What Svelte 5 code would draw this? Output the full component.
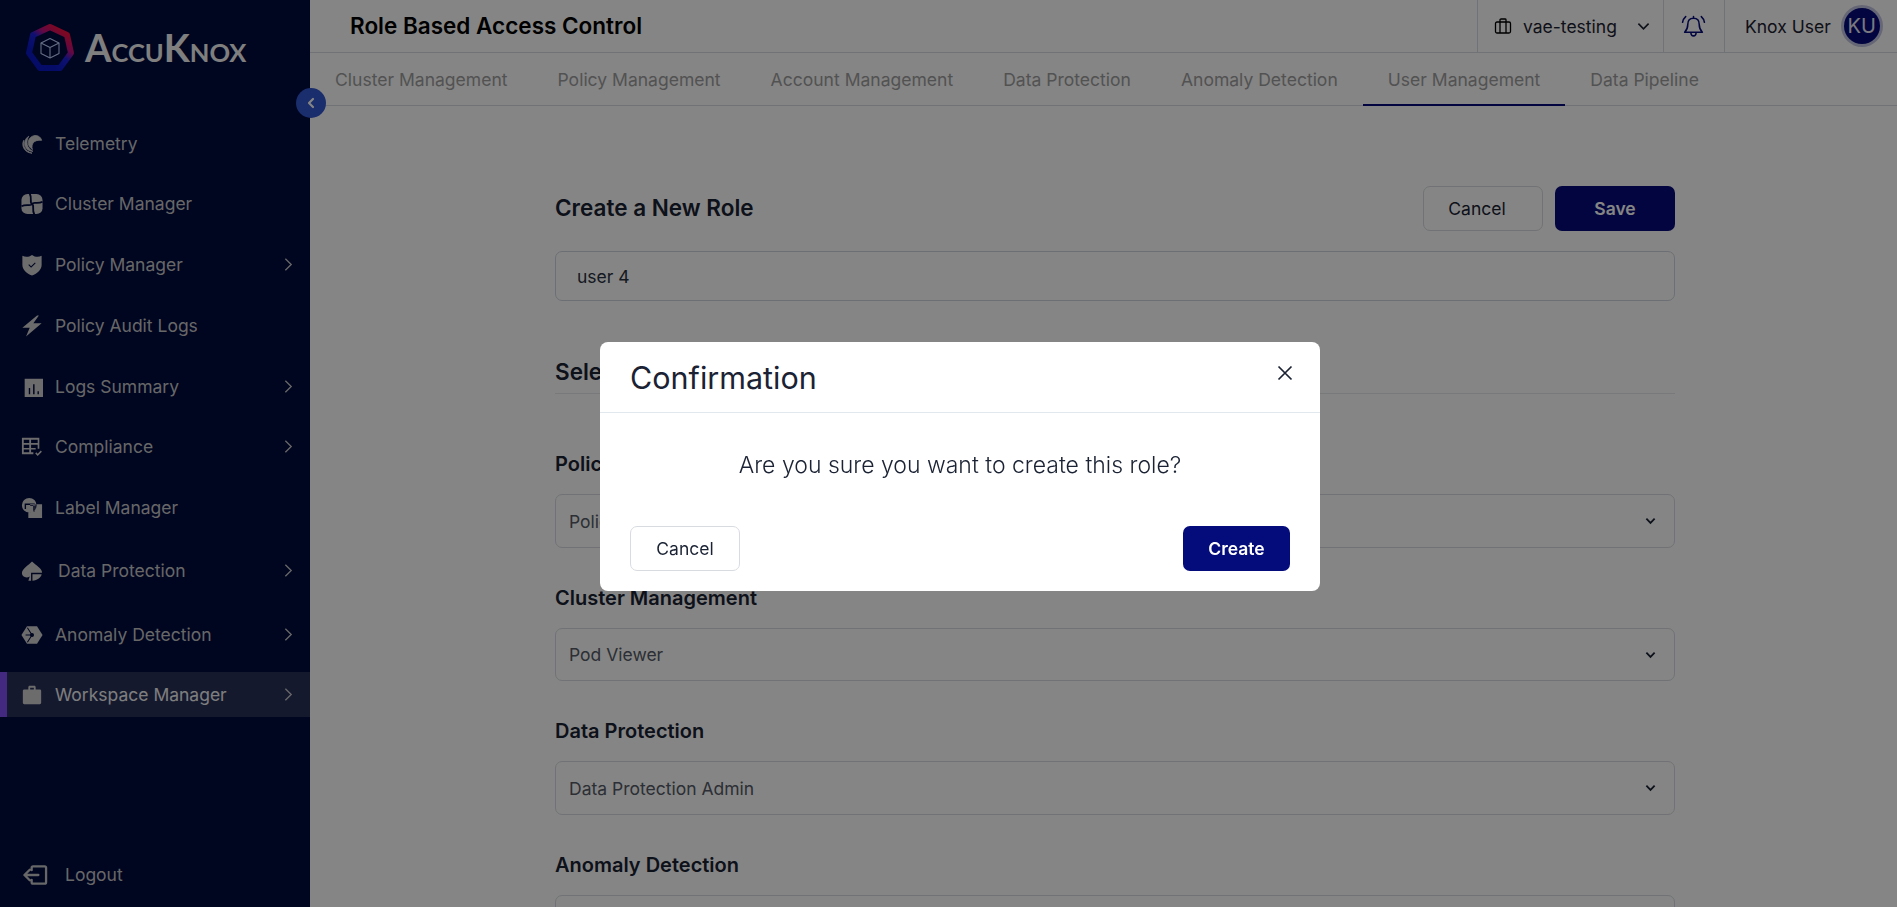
<script>
  // Sidebar entries; icon paths are drawn on a 24x24 box
  const navItems = [
    { label: 'Telemetry', icon: 'telemetry', cls: 'nudge' },
    { label: 'Cluster Manager', icon: 'cluster' },
    { label: 'Policy Manager', icon: 'shield', more: true },
    { label: 'Policy Audit Logs', icon: 'bolt' },
    { label: 'Logs Summary', icon: 'logs', more: true },
    { label: 'Compliance', icon: 'compliance', more: true, cls: 'tight' },
    { label: 'Label Manager', icon: 'label' },
    { label: 'Data Protection', icon: 'spade', more: true, cls: 'shift-2 indent' },
    { label: 'Anomaly Detection', icon: 'anomaly', more: true, cls: 'shift-3' },
    { label: 'Workspace Manager', icon: 'case', more: true, cls: 'active tight' },
  ];

  const tabs = [
    'Cluster Management',
    'Policy Management',
    'Account Management',
    'Data Protection',
    'Anomaly Detection',
    'User Management',
    'Data Pipeline',
  ];

  const fields = [
    { label: 'Policy Management', value: 'Policy Viewer' },
    { label: 'Cluster Management', value: 'Pod Viewer' },
    { label: 'Data Protection', value: 'Data Protection Admin' },
    { label: 'Anomaly Detection', value: 'Anomaly Viewer' },
  ];

  let roleName = $state('user 4');
  let confirmOpen = $state(true);
</script>

{#snippet navIcon(name)}
  <svg class="nav-icon" viewBox="0 0 24 24" aria-hidden="true">
    {#if name === 'telemetry'}
      <g class="heavy">
        <path d="M22.500 8C21.500 4 17.500 2 14 3 10 4 7.500 7.500 8 11.500 8.500 14.500 10 16.500 12.500 18 11.500 15.500 12 12 13.500 10.500 15 8.500 18.500 7.500 22.500 8z"/>
        <path d="M8.500 3.500C4.500 6 3 10.500 4.500 14.500 6 18 9 20 13 20 10 18.500 7.500 16 6.800 12.500 6 9 7 6 8.500 3.500z"/>
        <path d="M3 8C1 12 2 16.500 5.500 19.500 7.500 21 9.500 22 12 22 8.500 21 5 19 3.500 15 2.500 12.500 2.500 10.500 3 8z"/>
      </g>
    {:else if name === 'cluster'}
      <rect x="0.500" y="1" width="23" height="22" rx="6.500" />
      <g class="cut">
        <path d="M12 12C9 11 12.500 6 9.500 0.500" />
        <path d="M12 12C13 9 18 12.500 23.500 9.500" />
        <path d="M12 12C15 13 11.500 18 14.500 23.500" />
        <path d="M12 12C11 15 6 11.500 0.500 14.500" />
      </g>
    {:else if name === 'shield'}
      <path fill-rule="evenodd" d="M1.500 2C5 3.500 8.500 3.500 12 1c3.500 2.500 7 2.500 10.500 1V12c0 5-4.500 9.500-10.500 11.500C6 21.500 1.500 17 1.500 12V2zM8 12l3 3 5-5-.8-.8-4.200 4.200-2.200-2.200L8 12z"/>
    {:else if name === 'bolt'}
      <path d="M17.500 0.500 1.500 14h8L5.500 23.500 22.500 9h-9l6-8.500z"/>
    {:else if name === 'logs'}
      <path fill-rule="evenodd" d="M4 3h20v20H4V3zm6 10H8.500v7H10v-7zm4.800-4h-1.600v11h1.600V9zm4.700 7.500H18V20h1.500v-3.500z"/>
    {:else if name === 'compliance'}
      <path fill-rule="evenodd" d="M1 2h19v12h-1.800V9.500H11V13h5v1.800h-5v3h2.500v2H1V2zm2 2v3.500h6V4H3zm8 0v3.500h7.200V4H11zM3 9.500V13h6V9.500H3zm0 5.300v3h6v-3H3z"/>
      <path d="M15.500 19l1.200-1.200 1.500 1.500 3.400-3.400 1.200 1.200-4.600 4.600z"/>
    {:else if name === 'label'}
      <path fill-rule="evenodd" d="M9 1a8 8 0 1 1 0 16A8 8 0 0 1 9 1zm1 7h13v15H8v-6.200c.4.100.8.200 1 .2 3 0 5.400-1.700 6.500-4.200V8H16v1.500H10V8zM4 7h11v8.800h-1.600V8.600H5.500V13H4V7z" />
    {:else if name === 'spade'}
      <path d="M12 1.500C8.500 5.500 1 9 1 14.500c0 3 2.500 4.500 5 4.500 1.200 0 2.400-.3 3.500-1L8 22.500h3V14h12c.3-5-7-8.500-11-12.500z"/>
      <path d="M12.500 15.500h10c-.5 3.500-4.500 6.500-10 7v-7z"/>
    {:else if name === 'anomaly'}
      <path d="M6.500 2.500h11L23.500 12l-6 9.500h-11L.5 12z"/>
      <g class="cut thin">
        <path d="M12 12H5M12 12 7 4M12 12l-5 8" />
      </g>
      <circle class="hole" cx="12" cy="12" r="2.200" />
    {:else if name === 'case'}
      <path fill-rule="evenodd" d="M8 6V3.500C8 2.700 8.700 2 9.500 2h5c.8 0 1.500.7 1.500 1.500V6h4.500c1 0 1.500.7 1.500 1.500V20.500c0 1-.7 1.500-1.500 1.500h-17C2.700 22 2 21.500 2 20.500V7.500C2 6.700 2.700 6 3.500 6H8zm2 0h4V4h-4v2z"/>
    {/if}
  </svg>
{/snippet}

{#snippet chevronDown()}
  <svg class="select-caret" viewBox="0 0 12 8" aria-hidden="true">
    <path d="M1.500 1.500 6 6l4.500-4.500"/>
  </svg>
{/snippet}

<div class="app">
  <aside class="sidebar">
    <div class="logo">
      <svg class="logo-mark" viewBox="0 0 50 50" aria-hidden="true">
        <defs>
          <linearGradient id="ring" x1="0.75" y1="0.05" x2="0.25" y2="0.7">
            <stop offset="0" stop-color="#f01040" />
            <stop offset="0.35" stop-color="#c01080" />
            <stop offset="0.6" stop-color="#1c20d8" />
            <stop offset="1" stop-color="#0a18c8" />
          </linearGradient>
        </defs>
        <polygon points="25,4 42,12 46,30 35,45 15,45 4,30 8,12" fill="none" stroke="url(#ring)" stroke-width="6" stroke-linejoin="round" />
        <g fill="none" stroke="#c0d4ff" stroke-width="1.100" stroke-linejoin="round">
          <path d="M25 15.500 34 20v10.500L25 35 16 30.500V20z" />
          <path d="M16 20l9 4.500L34 20M25 24.500V35" />
        </g>
      </svg>
      <span class="logo-text"><span class="cap">A</span>CCU<span class="cap">K</span>NOX</span>
    </div>

    <nav class="nav">
      {#each navItems as item}
        <a href="#{item.icon}" class="nav-item {item.cls ?? ''}">
          {@render navIcon(item.icon)}
          <span class="nav-label">{item.label}</span>
          {#if item.more}
            <svg class="nav-more" viewBox="0 0 10 16" aria-hidden="true"><path d="M1.500 1.500 8 8l-6.500 6.500"/></svg>
          {/if}
        </a>
      {/each}
    </nav>

    <a href="#logout" class="logout">
      <svg viewBox="0 0 26 20" aria-hidden="true">
        <path d="M9 5V2.500C9 1.700 9.700 1 10.500 1h12C23.300 1 24 1.700 24 2.500v15c0 .8-.7 1.500-1.500 1.500h-12C9.700 19 9 18.300 9 17.500V15M16 10H2M7 4.500 1.500 10 7 15.500"/>
      </svg>
      <span>Logout</span>
    </a>
  </aside>

  <button class="collapse" aria-label="Collapse sidebar">
    <svg viewBox="0 0 10 12" aria-hidden="true"><path d="M7 2 3 6l4 4"/></svg>
  </button>

  <div class="main">
    <header class="topbar">
      <h1>Role Based Access Control</h1>
      <div class="top-cell workspace">
        <svg class="case-outline" viewBox="0 0 18 18" aria-hidden="true">
          <rect x="1.500" y="5" width="15" height="11" rx="1.500" />
          <path d="M6 5V2.800C6 2.200 6.400 2 7 2h4c.6 0 1 .2 1 .8V5M6 5v11M12 5v11" />
        </svg>
        <span>vae-testing</span>
        <svg class="top-caret" viewBox="0 0 14 9" aria-hidden="true"><path d="M1.500 1.500 7 7l5.500-5.500"/></svg>
      </div>
      <div class="top-cell bell">
        <svg viewBox="0 0 24 24" aria-hidden="true">
          <path d="M12 4c-3.500 0-5.500 2.500-5.500 6 0 3.500-1 5.500-3 7.500h17c-2-2-3-4-3-7.500 0-3.500-2-6-5.500-6zM12 4V2.500M9.500 17.500c0 2 1 3.500 2.500 3.500s2.500-1.500 2.500-3.500M4.500 2.500C2.800 4 1.800 6 1.500 8M19.500 2.500C21.200 4 22.200 6 22.500 8"/>
        </svg>
      </div>
      <div class="top-cell user">
        <span>Knox User</span>
        <span class="avatar">KU</span>
      </div>
    </header>

    <div class="tabs">
      {#each tabs as tab}
        <button class="tab" class:active={tab === 'User Management'}>{tab}</button>
      {/each}
    </div>

    <section class="form">
      <div class="form-head">
        <h2>Create a New Role</h2>
        <button class="btn outline head-cancel">Cancel</button>
        <button class="btn primary">Save</button>
      </div>

      <input class="role-name" bind:value={roleName} />

      <h3 class="section-title">Select Permissions</h3>

      {#each fields as field}
        <div class="field">
          <div class="field-label">{field.label}</div>
          <div class="select">
            <span>{field.value}</span>
            {@render chevronDown()}
          </div>
        </div>
      {/each}
    </section>
  </div>

  {#if confirmOpen}
    <div class="scrim">
      <div class="modal" role="dialog" aria-modal="true">
        <div class="modal-head">
          <h4>Confirmation</h4>
          <button class="close" aria-label="Close" onclick={() => (confirmOpen = false)}>
            <svg viewBox="0 0 16 16" aria-hidden="true"><path d="M1.500 1.500l13 13M14.500 1.500l-13 13"/></svg>
          </button>
        </div>
        <p class="modal-body">Are you sure you want to create this role?</p>
        <div class="modal-foot">
          <button class="btn modal-btn outline">Cancel</button>
          <button class="btn modal-btn primary">Create</button>
        </div>
      </div>
    </div>
  {/if}
</div>

<style>
  :global(body) {
    margin: 0;
    font-family: Inter, "Noto Sans", sans-serif;
    color: #1a2233;
    background: #fff;
    overflow: hidden;
  }

  .app { display: flex; height: 907px; overflow: hidden; position: relative; }

  /* Sidebar */
  .sidebar {
    width: 310px; flex: none;
    background: #000a3e;
    display: flex; flex-direction: column;
  }
  .logo {
    height: 120px; flex: none;
    display: flex; align-items: flex-start;
    padding: 23px 0 0 25px; box-sizing: border-box;
  }
  .logo-mark { width: 50px; height: 50px; flex: none; }
  .logo-text {
    margin: 2px 0 0 10px;
    font-family: Lato, "Open Sans", sans-serif; font-size: 25.500px; font-weight: 700;
    line-height: 44px;
    color: #f4f4f4;
  }
  .logo-text .cap { font-size: 38px; }

  .nav { display: flex; flex-direction: column; gap: 16px; }
  .nav-item {
    height: 45px; box-sizing: border-box;
    display: flex; align-items: center;
    padding: 0 17px 0 21px;
    color: #c6c6c8; text-decoration: none;
    font-size: 17.500px;
    position: relative;
  }
  .nav-item.nudge { padding-top: 2px; }
  .nav-item.tight { margin-top: -1px; }
  .nav-item.shift-2 { margin-top: 2px; }
  .nav-item.shift-3 { margin-top: 3px; }
  .nav-item.indent .nav-label { margin-left: 15px; }
  .nav-item.active { background: #283058; color: #f2f2f4; }
  .nav-item.active::before {
    content: ''; position: absolute; left: 0; top: 0; bottom: 0;
    width: 7px; background: #8350f5;
  }
  .nav-icon { width: 22px; height: 22px; flex: none; fill: #cfcfd2; }
  .nav-icon .heavy { stroke: #cfcfd2; stroke-width: 0.900; stroke-linejoin: round; }
  .nav-icon .cut { fill: none; stroke: #000a3e; stroke-width: 2; }
  .nav-icon .cut.thin { stroke-width: 1.100; }
  .nav-icon .hole { fill: #000a3e; }
  .nav-label { margin-left: 12px; flex: 1; white-space: nowrap; }
  .nav-more {
    width: 9px; height: 15px; flex: none;
    fill: none; stroke: #c6c6c8; stroke-width: 1.500;
  }

  .logout {
    margin-top: auto; margin-bottom: 10px;
    height: 45px;
    display: flex; align-items: center; gap: 17px;
    padding-left: 23px;
    color: #c6c6c8; text-decoration: none; font-size: 17.500px;
  }
  .logout svg {
    width: 25px; height: 20px;
    fill: none; stroke: #c6c6c8; stroke-width: 2.400; stroke-linecap: round; stroke-linejoin: round;
  }

  /* sits on the sidebar edge */
  .collapse {
    position: absolute; left: 296px; top: 88px;
    width: 30px; height: 30px; padding: 0;
    border: none; border-radius: 50%;
    background: #3357cf;
    display: flex; align-items: center; justify-content: center;
    z-index: 2;
  }
  .collapse svg {
    width: 10px; height: 12px;
    fill: none; stroke: #fff; stroke-width: 2.200; stroke-linecap: round; stroke-linejoin: round;
  }

  /* Top bar */
  .main { flex: 1; min-width: 0; display: flex; flex-direction: column; }
  .topbar {
    height: 53px; flex: none; box-sizing: border-box;
    display: flex; align-items: stretch;
    border-bottom: 1px solid #d8dbe0;
  }
  .topbar h1 {
    margin: 0 auto 0 40px;
    font-size: 22.500px; font-weight: 600; line-height: 51px;
    color: #000;
  }
  .top-cell {
    display: flex; align-items: center;
    border-left: 1px solid #d8dbe0;
    font-size: 17.500px; color: #1d2230;
  }
  .workspace { width: 186px; box-sizing: border-box; padding-left: 16px; }
  .case-outline {
    width: 18px; height: 18px; flex: none;
    fill: none; stroke: #000; stroke-width: 1.300;
  }
  .workspace span { margin-left: 11px; }
  .top-caret {
    width: 13px; height: 9px; margin-left: 20px;
    fill: none; stroke: #1d2230; stroke-width: 1.800;
  }
  .bell { width: 61px; box-sizing: border-box; justify-content: center; }
  .bell svg {
    width: 25px; height: 25px; margin-left: -2px;
    fill: none; stroke: #040b7a; stroke-width: 1.500; stroke-linecap: round; stroke-linejoin: round;
  }
  .user { width: 173px; box-sizing: border-box; padding-left: 20px; }
  .avatar {
    margin-left: 13px;
    width: 36px; height: 36px;
    border-radius: 50%;
    background: #040b7a; color: #e8e8f4;
    box-shadow: 0 0 0 3px #c4c6e2;
    font-size: 20px;
    display: flex; align-items: center; justify-content: center;
  }

  /* Tabs */
  .tabs {
    height: 53px; flex: none; box-sizing: border-box;
    display: flex;
    border-bottom: 1px solid #d8dbe0;
  }
  .tab {
    height: 53px; padding: 2px 25px 0; box-sizing: border-box;
    border: none; border-bottom: 2px solid transparent;
    background: none;
    font-family: inherit; font-size: 17.550px;
    color: #9e9e9e;
  }
  .tab.active { border-bottom-color: #040b7a; }

  /* Form */
  .form { width: 1120px; margin: 80px 0 0 245px; }
  .form-head { display: flex; align-items: center; gap: 12px; height: 45px; }
  .form-head h2 {
    margin: 0 auto 2px 0;
    font-size: 22.500px; font-weight: 600; color: #1a2233;
  }
  .btn {
    height: 45px; box-sizing: border-box; border-radius: 7px;
    font-family: inherit; font-size: 17.500px;
  }
  .form-head .btn { width: 120px; }
  .form-head .head-cancel { padding: 0 12px 0 0; }
  .btn.outline { background: #fff; border: 1px solid #d8dbe0; color: #1a2233; }
  .btn.primary { background: #040b7a; border: none; color: #fff; font-weight: 600; }

  .role-name {
    display: block; width: 100%; height: 50px; box-sizing: border-box;
    margin-top: 20px; padding: 0 21px;
    border: 1px solid #cfd5dd; border-radius: 7px;
    font-family: inherit; font-size: 17.500px; color: #2a3040;
    outline: none;
  }
  .section-title {
    margin: 59px 0 0; padding-bottom: 9px;
    border-bottom: 1px solid #e6e8ec;
    font-size: 22.500px; font-weight: 600; line-height: 24px;
  }
  .field { margin-bottom: 39px; }
  .section-title + .field { margin-top: 59px; }
  .field-label { font-size: 20px; font-weight: 600; line-height: 22px; margin-bottom: 19px; }
  .select {
    height: 53.500px; box-sizing: border-box;
    display: flex; align-items: center; justify-content: space-between;
    padding: 1px 18px 0 13px;
    border: 1px solid #d8dbe0; border-radius: 7px;
    font-size: 17.500px; color: #555a66;
  }
  .select-caret {
    width: 11px; height: 8px;
    fill: none; stroke: #1a2233; stroke-width: 2;
  }

  /* Confirmation */
  .scrim {
    position: fixed; inset: 0; z-index: 10;
    background: rgba(0, 0, 0, 0.48);
  }
  .modal {
    position: absolute; left: 600px; top: 342px;
    width: 720px; height: 249px; box-sizing: border-box;
    background: #fff; border-radius: 8px;
    display: flex; flex-direction: column;
  }
  .modal-head {
    height: 71px; flex: none; box-sizing: border-box;
    display: flex; justify-content: space-between;
    padding: 0 26px 0 30px;
    border-bottom: 1px solid #e1e8ee;
  }
  .modal-head h4 {
    margin: 0;
    font-size: 30.500px; font-weight: 400; line-height: 71px;
    color: #1a2233;
  }
  .close {
    width: 18px; height: 18px; margin-top: 22px; padding: 0;
    border: none; background: none;
  }
  .close svg {
    display: block; width: 16px; height: 16px; margin: auto;
    fill: none; stroke: #1a2233; stroke-width: 1.700;
  }
  .modal-body {
    margin: 37px 0 0;
    text-align: center;
    font-size: 23px; font-weight: 300; line-height: 30px;
    color: #1a2233;
  }
  .modal-foot {
    margin-top: auto; padding: 0 30px 20px;
    display: flex; justify-content: space-between;
  }
  .modal-btn.outline { width: 110px; }
  .modal-btn.primary { width: 107px; }
</style>
